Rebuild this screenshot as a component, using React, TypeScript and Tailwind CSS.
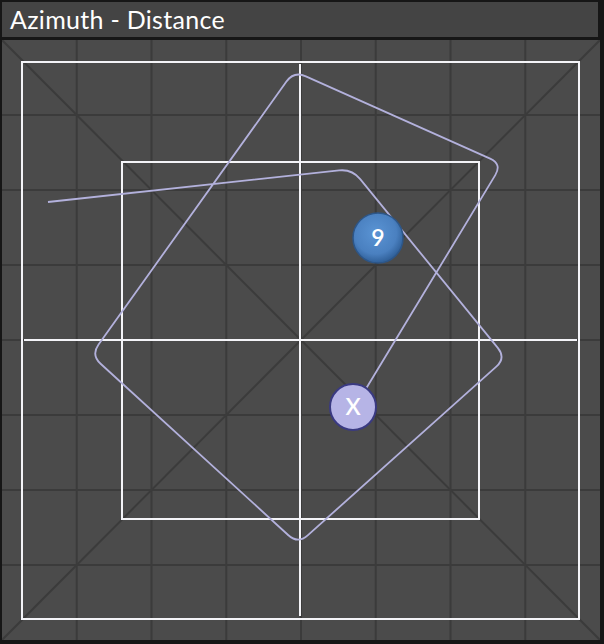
import React from "react";

type P = [number, number];

function roundedPath(pts: P[], r: number): string {
  let d = `M ${pts[0][0]} ${pts[0][1]}`;
  for (let i = 1; i < pts.length - 1; i++) {
    const [px, py] = pts[i - 1];
    const [cx, cy] = pts[i];
    const [nx, ny] = pts[i + 1];
    const l1 = Math.hypot(cx - px, cy - py);
    const l2 = Math.hypot(nx - cx, ny - cy);
    const a: P = [cx - ((cx - px) / l1) * r, cy - ((cy - py) / l1) * r];
    const b: P = [cx + ((nx - cx) / l2) * r, cy + ((ny - cy) / l2) * r];
    d += ` L ${a[0]} ${a[1]} Q ${cx} ${cy} ${b[0]} ${b[1]}`;
  }
  const last = pts[pts.length - 1];
  d += ` L ${last[0]} ${last[1]}`;
  return d;
}

const W = 598;
const H = 600;

export default function App() {
  const verts = Array.from({ length: 7 }, (_, i) => (W / 8) * (i + 1));
  const hors = Array.from({ length: 7 }, (_, i) => (H / 8) * (i + 1));
  const pts: P[] = [
    [46, 162],
    [350, 129],
    [504, 318],
    [296, 504],
    [89, 315],
    [292, 31],
    [500, 124],
    [362, 352],
  ];
  const grid = "#3b3b3b";
  return (
    <div className="w-[604px] h-[644px] bg-[#161616] relative overflow-hidden" style={{ fontFamily: "Lato, 'Open Sans', sans-serif" }}>
      <div className="ml-[2px] mt-[2px] w-[596px] h-[35px] bg-[#444444] flex items-center pl-[8px]">
        <span className="text-white text-[25px] leading-none tracking-[0.3px]">Azimuth - Distance</span>
      </div>
      <div className="ml-[2px] mt-[3px] w-[598px] h-[600px] bg-[#4b4b4b]">
        <svg width={W} height={H} viewBox={`0 0 ${W} ${H}`} className="block">
          {verts.map((x) => (
            <line key={"v" + x} x1={x} y1={0} x2={x} y2={H} stroke={grid} strokeWidth={2} />
          ))}
          {hors.map((y) => (
            <line key={"h" + y} x1={0} y1={y} x2={W} y2={y} stroke={grid} strokeWidth={2} />
          ))}
          <line x1={0} y1={0} x2={W} y2={H} stroke={grid} strokeWidth={2} />
          <line x1={W} y1={0} x2={0} y2={H} stroke={grid} strokeWidth={2} />
          <rect x={20} y={22} width={557} height={557} fill="none" stroke="#f4f4f8" strokeWidth={2} />
          <rect x={120} y={122} width={357} height={357} fill="none" stroke="#f4f4f8" strokeWidth={2} />
          <line x1={22} y1={300} x2={575} y2={300} stroke="#f4f4f8" strokeWidth={2} />
          <line x1={298} y1={24} x2={298} y2={576} stroke="#f4f4f8" strokeWidth={2} />
          <path d={roundedPath(pts, 13)} fill="none" stroke="#b3b1dc" strokeWidth={1.8} strokeLinejoin="round" />
          <defs>
            <radialGradient id="blueg" cx="45%" cy="40%" r="60%">
              <stop offset="0%" stopColor="#5a94d4" />
              <stop offset="70%" stopColor="#4a80c0" />
              <stop offset="100%" stopColor="#2f5f98" />
            </radialGradient>
          </defs>
          <circle cx={376} cy={198} r={25} fill="url(#blueg)" stroke="#2d5688" strokeWidth={1.5} />
          <text x={376} y={206} textAnchor="middle" fill="#ffffff" fontSize={23} fontWeight={600} fontFamily="Lato, 'Open Sans', sans-serif">9</text>
          <circle cx={351} cy={367} r={23} fill="#b6b4e6" stroke="#3a3a82" strokeWidth={2} />
          <text x={351} y={375} textAnchor="middle" fill="#ffffff" fontSize={23} fontWeight={600} fontFamily="Lato, 'Open Sans', sans-serif">X</text>
        </svg>
      </div>
    </div>
  );
}
